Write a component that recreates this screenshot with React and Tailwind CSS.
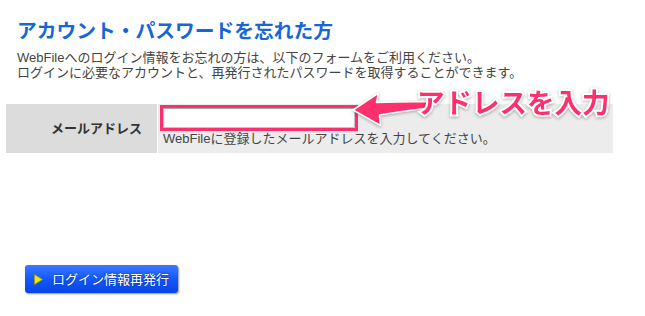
import React from "react";

export default function App() {
  return (
    <div className="relative w-[645px] h-[316px] overflow-hidden bg-white font-['Liberation_Sans','Noto_Sans_CJK_JP',sans-serif]">
      {/* Heading */}
      <div className="pl-[17px] pt-[17px]">
        <h1 className="text-[19.75px] leading-[28px] font-bold text-[#1766d8] whitespace-nowrap">
          アカウント・パスワードを忘れた方
        </h1>
        <p className="mt-[4.5px] text-[13px] leading-[15px] text-[#444] whitespace-nowrap">
          WebFileへのログイン情報をお忘れの方は、以下のフォームをご利用ください。
          <br />
          ログインに必要なアカウントと、再発行されたパスワードを取得することができます。
        </p>
      </div>

      {/* Form row */}
      <div className="ml-[6px] mt-[24.5px] flex w-[607px] h-[49px]">
        <div className="w-[151px] bg-[#dcdcdc] flex items-center justify-end pr-[15px] text-[13px] font-bold text-[#333]">
          メールアドレス
        </div>
        <div className="ml-px flex-1 bg-[#ececec] pl-[5px] pt-[4px]">
          <input
            type="text"
            className="block w-[192px] h-[20px] bg-white border border-[#c4c4c4] border-t-[#aaa] outline-none"
          />
          <div className="mt-[2.5px] text-[13px] leading-[15px] text-[#444] whitespace-nowrap">
            WebFileに登録したメールアドレスを入力してください。
          </div>
        </div>
      </div>

      {/* Submit */}
      <button className="ml-[25px] mt-[112px] flex items-center w-[153px] h-[28px] rounded-[3px] bg-gradient-to-b from-[#3a78ff] via-[#1457fb] to-[#0645e6] shadow-[1px_1px_2px_rgba(0,0,0,0.45)] pl-[9px]">
        <svg width="9" height="11" viewBox="0 0 9 11">
          <path d="M0.5 0.5 L8.5 5.5 L0.5 10.5 Z" fill="#e6ea10" stroke="#9a9a00" strokeWidth="0.8" />
        </svg>
        <span className="ml-[9px] text-[13px] leading-none text-white [text-shadow:0_0_2px_rgba(0,0,40,0.6)] whitespace-nowrap">
          ログイン情報再発行
        </span>
      </button>

      {/* Annotation: highlight frame */}
      <div className="absolute left-[160px] top-[105px] w-[198px] h-[26px] border-[3px] border-[#fe2f6c] pointer-events-none" />

      {/* Annotation: arrow */}
      <svg
        className="absolute left-[345px] top-[85px] pointer-events-none [filter:drop-shadow(0_1px_1.5px_rgba(0,0,0,0.3))]"
        width="90"
        height="50"
        viewBox="0 0 90 50"
      >
        <path
          d="M8 25 L33.5 8 L31.5 17.5 Q58 16.5 82 16.8 Q85 20 82 23.2 Q58 26 34.5 30 L35.5 40.5 Z"
          fill="#fe2f6c"
          stroke="#fff"
          strokeWidth="1.6"
          strokeLinejoin="round"
        />
      </svg>

      {/* Annotation: label */}
      <div className="absolute left-[417px] top-[86px] text-[27.5px] leading-[36px] font-bold text-[#fe2f6c] whitespace-nowrap [paint-order:stroke_fill] [-webkit-text-stroke:4px_#fff] [filter:drop-shadow(0_1px_1.5px_rgba(0,0,0,0.3))]">
        アドレスを入力
      </div>
    </div>
  );
}
